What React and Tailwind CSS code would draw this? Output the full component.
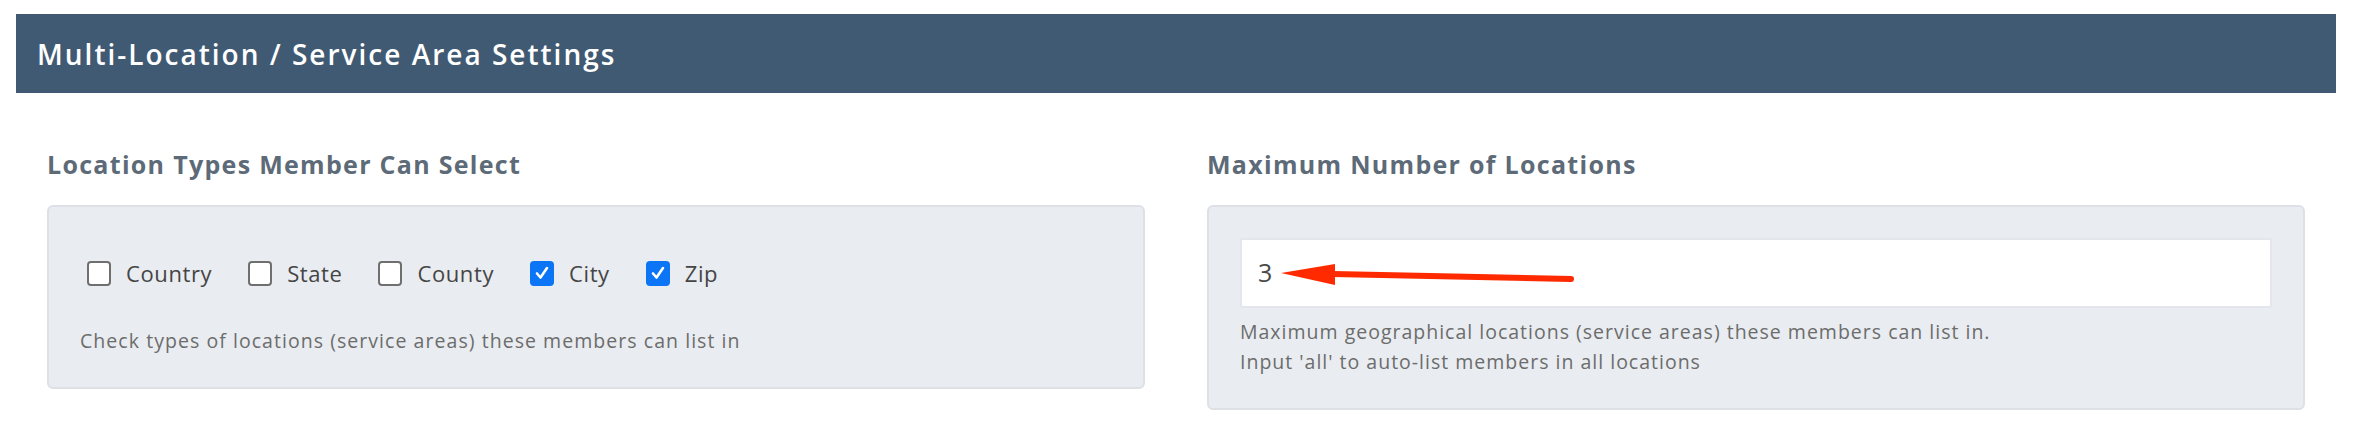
import React from 'react';

const TYPES = [
  { id: 'country', label: 'Country', checked: false },
  { id: 'state', label: 'State', checked: false },
  { id: 'county', label: 'County', checked: false },
  { id: 'city', label: 'City', checked: true },
  { id: 'zip', label: 'Zip', checked: true },
];

function Box({ checked }) {
  if (checked) {
    return (
      <span className="w-[24px] h-[25px] rounded-[4px] bg-[#0b75f5] flex items-center justify-center shrink-0">
        <svg width="16" height="16" viewBox="0 0 16 16" fill="none">
          <path d="M3 8.5 L6.5 12.5 L13 3" stroke="#fff" strokeWidth="2.6" strokeLinecap="round" strokeLinejoin="round" />
        </svg>
      </span>
    );
  }
  return <span className="w-[24px] h-[25px] rounded-[4px] bg-white border-2 border-[#6f6f6f] shrink-0"></span>;
}

export default function App() {
  return (
    <div className="w-[2336px] pl-4 pt-[14px] bg-white" style={{ fontFamily: '"Open Sans", Lato, sans-serif' }}>
      {/* Panel header */}
      <div className="h-[79px] bg-[#415a73] flex items-center pl-[21px]">
        <h1 className="text-[28px] font-semibold text-white tracking-[2px]">Multi-Location / Service Area Settings</h1>
      </div>

      <div className="grid grid-cols-2 gap-x-[62px] px-[31px] pt-[56px]">
        {/* Location types */}
        <div>
          <h2 className="text-[25px] leading-[30px] font-bold text-[#5d6a77] tracking-[1.3px]">Location Types Member Can Select</h2>
          <div className="mt-[26px] bg-[#e9ecf0] border-2 border-[#dde1e5] rounded-[6px] px-[31px] pt-[31px] pb-[31px]">
            <div className="h-[70px] flex items-center gap-[36px] pl-[7px]">
              {TYPES.map(t => (
                <label key={t.id} className="flex items-center gap-[15px]">
                  <Box checked={t.checked} />
                  <span className="text-[22px] text-[#454545] tracking-[0.6px]">{t.label}</span>
                </label>
              ))}
            </div>
            <p className="mt-[18px] text-[19.5px] leading-[30px] text-[#6c6c6c] tracking-[1.05px]">
              Check types of locations (service areas) these members can list in
            </p>
          </div>
        </div>

        {/* Max locations */}
        <div>
          <h2 className="text-[25px] leading-[30px] font-bold text-[#5d6a77] tracking-[1.3px]">Maximum Number of Locations</h2>
          <div className="mt-[26px] bg-[#e9ecf0] border-2 border-[#dde1e5] rounded-[6px] px-[31px] pt-[31px] pb-[31px]">
            <div className="relative h-[70px] bg-white border-2 border-[#e3e6ea] rounded-[3px] flex items-center pl-[16px]">
              <span className="text-[25px] text-[#494949]">3</span>
              <svg className="absolute left-[35px] top-[18px]" width="300" height="36" viewBox="0 0 300 36" fill="none">
                <path d="M56 16 L294 21" stroke="#ff2a00" strokeWidth="6" strokeLinecap="round" />
                <path d="M4 15 L58 6 L58 27 Z" fill="#ff2a00" />
              </svg>
            </div>
            <p className="mt-[9px] text-[19.5px] leading-[30px] text-[#6c6c6c] tracking-[1px]">
              Maximum geographical locations (service areas) these members can list in.
              <br />
              Input 'all' to auto-list members in all locations
            </p>
          </div>
        </div>
      </div>
    </div>
  );
}
